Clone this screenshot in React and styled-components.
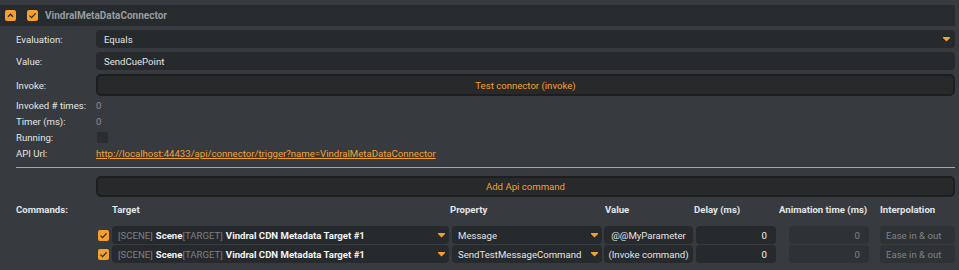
import React from "react"
import styled, { createGlobalStyle } from "styled-components"

const GlobalStyle = createGlobalStyle`
  body {
    margin: 0;
    background: #373b3f;
    font-family: "Roboto", "Inter", sans-serif;
    font-size: 9.6px;
    color: #e2e4e6;
  }
`

const ORANGE = "#f5a02c"

const Page = styled.div`
  width: 959px;
  height: 270px;
  padding-top: 5px;
  box-sizing: border-box;
  overflow: hidden;
`

const Header = styled.div`
  display: flex;
  align-items: center;
  height: 21px;
  width: 955px;
  background: #282b2d;
  padding-left: 5px;
  box-sizing: border-box;
  gap: 11px;
`

const OrangeBox = styled.div`
  width: 11px;
  height: 11px;
  border-radius: 2px;
  background: ${ORANGE};
  display: flex;
  align-items: center;
  justify-content: center;
  flex-shrink: 0;
`

const Title = styled.span`
  font-weight: 700;
  font-size: 10px;
  color: #969ca2;
  margin-left: -4px;
`

const Body = styled.div`
  padding: 4px 4px 0 16px;
`

const FieldRow = styled.div`
  display: grid;
  grid-template-columns: 80px 1fr;
  align-items: center;
  height: ${p => p.h}px;
  margin-bottom: ${p => p.mb || 0}px;
`

const Label = styled.span`
  color: #e2e4e6;
  white-space: nowrap;
`

const Field = styled.div`
  position: relative;
  display: flex;
  align-items: center;
  height: 18px;
  background: ${p => (p.disabled ? "#2e3235" : "#272a2c")};
  border-radius: 4px;
  padding: 0 ${p => p.pr || 8}px 0 ${p => p.pl || 8}px;
  box-sizing: border-box;
  color: ${p => (p.disabled ? "#7d8389" : "#e2e4e6")};
  justify-content: ${p => p.justify || "flex-start"};
  width: ${p => (p.w ? p.w + "px" : "auto")};
  margin-left: ${p => p.ml || 0}px;
  white-space: nowrap;
  overflow: hidden;
`

const Caret = styled.svg`
  position: absolute;
  right: ${p => p.r || 6}px;
  top: 50%;
  margin-top: -2px;
`

const ActionButton = styled.div`
  height: ${p => p.h}px;
  border: 2px solid #1c1e1f;
  border-radius: 5px;
  background: #27292b;
  color: ${ORANGE};
  display: flex;
  align-items: center;
  justify-content: center;
  box-sizing: border-box;
`

const Muted = styled.span`
  color: #8a9096;
`

const Link = styled.a`
  color: ${ORANGE};
  text-decoration: underline;
  text-underline-offset: 1px;
  white-space: nowrap;
`

const EmptyBox = styled.div`
  width: 11px;
  height: 11px;
  border-radius: 2px;
  background: #2a2e31;
  margin-left: 1px;
`

const Divider = styled.div`
  height: 1px;
  background: #a3a7ab;
  margin: 6px 0 8px 0;
`

const Commands = styled.div`
  display: grid;
  grid-template-columns: 80px 16px 340px 152px 89px 96px 91px 75px;
  grid-template-rows: 18px 6px 18px 18px;
  row-gap: 1px;
  align-items: center;
  margin-top: 3px;
`

const HeadCell = styled.span`
  font-weight: 700;
  color: #e2e4e6;
  margin-left: ${p => p.shift || 0}px;
  white-space: nowrap;
`

const Spacer = styled.div`
  grid-column: 1 / -1;
`

const Dim = styled.span`
  color: #7a8086;
  margin-right: 3px;
`

const Strong = styled.span`
  font-weight: 700;
  color: #f2f3f4;
`

const Plain = styled.span`
  color: #f2f3f4;
`

const CheckCell = styled.div`
  display: flex;
  align-items: center;
  padding-left: 2px;
`

const Check = () => (
  <OrangeBox>
    <svg width="9" height="9" viewBox="0 0 9 9">
      <path d="M1.5 4.6 L3.6 6.6 L7.6 2.4" fill="none" stroke="#2a2a2a" strokeWidth="1.3" />
    </svg>
  </OrangeBox>
)

const Chevron = () => (
  <OrangeBox>
    <svg width="9" height="9" viewBox="0 0 9 9">
      <path d="M2 5.8 L4.5 3.2 L7 5.8" fill="none" stroke="#2a2a2a" strokeWidth="1.3" />
    </svg>
  </OrangeBox>
)

const DropArrow = ({ r }) => (
  <Caret r={r} width="7" height="5" viewBox="0 0 7 5">
    <rect x="0" y="0" width="7" height="1" fill={ORANGE} />
    <polygon points="0,1 7,1 3.5,4.5" fill={ORANGE} />
  </Caret>
)

const commandRows = [
  { property: "Message", value: "@@MyParameter" },
  { property: "SendTestMessageCommand", value: "(Invoke command)" },
]

export default function App() {
  return (
    <Page>
      <GlobalStyle />
      <Header>
        <Chevron />
        <Check />
        <Title>VindralMetaDataConnector</Title>
      </Header>
      <Body>
        <FieldRow h={18} mb={4}>
          <Label>Evaluation:</Label>
          <Field>
            Equals
            <DropArrow r={5} />
          </Field>
        </FieldRow>
        <FieldRow h={18} mb={4}>
          <Label>Value:</Label>
          <Field>SendCuePoint</Field>
        </FieldRow>
        <FieldRow h={22} mb={1}>
          <Label>Invoke:</Label>
          <ActionButton h={22}>Test connector (invoke)</ActionButton>
        </FieldRow>
        <FieldRow h={16}>
          <Label>Invoked # times:</Label>
          <Muted>0</Muted>
        </FieldRow>
        <FieldRow h={16}>
          <Label>Timer (ms):</Label>
          <Muted>0</Muted>
        </FieldRow>
        <FieldRow h={16}>
          <Label>Running:</Label>
          <EmptyBox />
        </FieldRow>
        <FieldRow h={16}>
          <Label>API Url:</Label>
          <Link>http://localhost:44433/api/connector/trigger?name=VindralMetaDataConnector</Link>
        </FieldRow>
        <Divider />
        <FieldRow h={21}>
          <span />
          <ActionButton h={21}>Add Api command</ActionButton>
        </FieldRow>
        <Commands>
          <HeadCell>Commands:</HeadCell>
          <span />
          <HeadCell>Target</HeadCell>
          <HeadCell shift={-2}>Property</HeadCell>
          <HeadCell shift={1}>Value</HeadCell>
          <HeadCell shift={1}>Delay (ms)</HeadCell>
          <HeadCell shift={-10}>Animation time (ms)</HeadCell>
          <HeadCell>Interpolation</HeadCell>
          <Spacer />
          {commandRows.map((row, i) => (
            <React.Fragment key={i}>
              <span />
              <CheckCell>
                <Check />
              </CheckCell>
              <Field w={337} pl={6}>
                <Dim>[SCENE]</Dim>
                <Strong>Scene</Strong>
                <Dim>[TARGET]</Dim>
                <Strong>Vindral CDN Metadata Target #1</Strong>
                <DropArrow r={4} />
              </Field>
              <Field w={150} pl={6}>
                {row.property}
                <DropArrow r={4} />
              </Field>
              <Field w={89} pl={3} pr={3} justify="center">{row.value}</Field>
              <Field w={80} justify="flex-end" pr={9} ml={3}>
                <Plain>0</Plain>
              </Field>
              <Field w={80} disabled justify="flex-end" pr={9}>0</Field>
              <Field w={75} disabled pl={6}>Ease in &amp; out</Field>
            </React.Fragment>
          ))}
        </Commands>
      </Body>
    </Page>
  )
}
